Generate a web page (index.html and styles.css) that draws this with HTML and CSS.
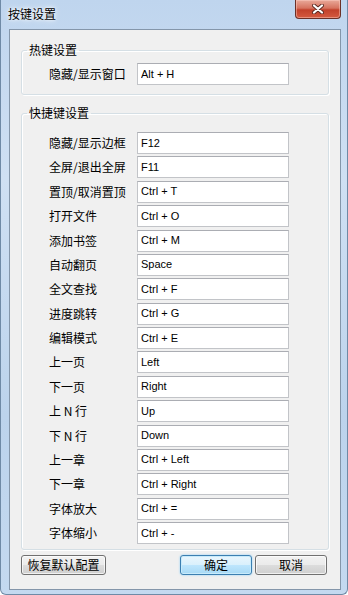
FILE: index.html
```html
<!DOCTYPE html>
<html lang="zh-cn">
<head>
    <meta charset="UTF-8">
    <meta name="viewport" content="width=device-width, initial-scale=1.0">
    <title>按键设置</title>
    <link rel="stylesheet" href="styles.css">
</head>
<body>
    <div class="window">
        <div class="titlebar">
            <span class="title">按键设置</span>
            <button type="button" class="close" aria-label="关闭">
                <svg width="12" height="10" viewBox="0 0 12 10">
                    <path d="M2 1.5 L10 8.5 M10 1.5 L2 8.5" stroke="#5b2a22" stroke-width="4" stroke-linecap="round"/>
                    <path d="M2 1.5 L10 8.5 M10 1.5 L2 8.5" stroke="#ffffff" stroke-width="2.2" stroke-linecap="round"/>
                </svg>
            </button>
        </div>

        <div class="client">
            <fieldset class="group group-hot">
                <legend>热键设置</legend>
                <div class="rows">
                    <label for="k0">隐藏/显示窗口</label>
                    <input type="text" id="k0" value="Alt + H">
                </div>
            </fieldset>

            <fieldset class="group group-keys">
                <legend>快捷键设置</legend>
                <div class="rows">
                    <label for="k1">隐藏/显示边框</label>
                    <input type="text" id="k1" value="F12">
                    <label for="k2">全屏/退出全屏</label>
                    <input type="text" id="k2" value="F11">
                    <label for="k3">置顶/取消置顶</label>
                    <input type="text" id="k3" value="Ctrl + T">
                    <label for="k4">打开文件</label>
                    <input type="text" id="k4" value="Ctrl + O">
                    <label for="k5">添加书签</label>
                    <input type="text" id="k5" value="Ctrl + M">
                    <label for="k6">自动翻页</label>
                    <input type="text" id="k6" value="Space">
                    <label for="k7">全文查找</label>
                    <input type="text" id="k7" value="Ctrl + F">
                    <label for="k8">进度跳转</label>
                    <input type="text" id="k8" value="Ctrl + G">
                    <label for="k9">编辑模式</label>
                    <input type="text" id="k9" value="Ctrl + E">
                    <label for="k10">上一页</label>
                    <input type="text" id="k10" value="Left">
                    <label for="k11">下一页</label>
                    <input type="text" id="k11" value="Right">
                    <label for="k12">上 N 行</label>
                    <input type="text" id="k12" value="Up">
                    <label for="k13">下 N 行</label>
                    <input type="text" id="k13" value="Down">
                    <label for="k14">上一章</label>
                    <input type="text" id="k14" value="Ctrl + Left">
                    <label for="k15">下一章</label>
                    <input type="text" id="k15" value="Ctrl + Right">
                    <label for="k16">字体放大</label>
                    <input type="text" id="k16" value="Ctrl + =">
                    <label for="k17">字体缩小</label>
                    <input type="text" id="k17" value="Ctrl + -">
                </div>
            </fieldset>

            <div class="actions">
                <button type="button" class="btn btn-reset">恢复默认配置</button>
                <span class="spacer"></span>
                <button type="button" class="btn btn-ok">确定</button>
                <button type="button" class="btn">取消</button>
            </div>
        </div>
    </div>
</body>
</html>
```

FILE: styles.css
```css
html, body {
    margin: 0;
    padding: 0;
}
body {
    font-family: "Noto Sans CJK SC", "Liberation Sans", sans-serif;
    font-size: 12px;
    color: #000;
    background: #fff;
}
.window {
    box-sizing: border-box;
    width: 348px;
    height: 595px;
    padding: 0 6px 4px 8px;
    display: flex;
    flex-direction: column;
    border: 1px solid #6f8aa6;
    border-top: none;
    border-radius: 0 0 6px 6px;
    background: linear-gradient(to bottom, #bfd5ee 0%, #cfe0f3 30%, #bcd3ec 70%, #c4d9f0 100%);
}
.titlebar {
    height: 29px;
    display: flex;
    align-items: flex-start;
}
.title {
    margin-top: 5px;
    margin-left: -1px;
    line-height: 18px;
    text-shadow: 0 0 6px #fff, 0 0 3px #fff;
}
.close {
    margin-left: auto;
    margin-right: 0;
    width: 46px;
    height: 19px;
    padding: 0;
    border: 1px solid #6b3027;
    border-top: none;
    border-radius: 0 0 4px 4px;
    background: linear-gradient(to bottom, #e9a99a 0%, #d6735f 45%, #c2412b 55%, #d45a40 100%);
    box-shadow: inset 0 0 0 1px rgba(255, 210, 200, 0.45);
    display: flex;
    align-items: center;
    justify-content: center;
}
.close svg {
    display: block;
}
.client {
    flex: 1;
    background: #f0f0f0;
    border: 1px solid #8496aa;
    display: flex;
    flex-direction: column;
}
.group {
    margin: 0 11px 0 11px;
    padding: 0;
    border: 1px solid #d5dfe5;
    border-radius: 3px;
    box-shadow: 1px 1px 0 #fff, inset 1px 1px 0 #fff;
    min-width: 0;
}
.group legend {
    margin-left: 5px;
    padding: 0 2px;
    line-height: 16px;
}
.group-hot {
    margin-top: 12px;
    padding-top: 5px;
    padding-bottom: 9px;
}
.group-keys {
    margin-top: 10px;
    padding-top: 11px;
    padding-bottom: 5px;
}
.rows {
    display: grid;
    grid-template-columns: 88px 152px;
    row-gap: 2.375px;
    align-items: center;
    padding-left: 27px;
}
.rows label {
    line-height: 16px;
    white-space: nowrap;
}
.rows input {
    box-sizing: border-box;
    width: 152px;
    height: 22px;
    margin: 0;
    padding: 0 3px 1px;
    border: 1px solid #c2c4c8;
    border-top-color: #abadb3;
    background: #fff;
    font-family: "Liberation Sans", Arial, sans-serif;
    font-size: 11px;
    color: #000;
    outline: none;
}
.actions {
    display: flex;
    gap: 3px;
    margin: 5px 13px 0 11px;
}
.spacer {
    flex: 1;
}
.btn {
    box-sizing: border-box;
    height: 20px;
    width: 72px;
    padding: 0;
    border: 1px solid #707070;
    border-radius: 3px;
    background: linear-gradient(to bottom, #f2f2f2 0%, #ebebeb 50%, #dddddd 50%, #cfcfcf 100%);
    box-shadow: inset 0 0 0 1px rgba(255, 255, 255, 0.7);
    font-family: "Noto Sans CJK SC", sans-serif;
    font-size: 12px;
    line-height: 16px;
    color: #000;
}
.btn-reset {
    width: 85px;
}
.btn-ok {
    border-color: #3c7fb1;
    background: linear-gradient(to bottom, #eaf6fd 0%, #d9f0fc 50%, #bee6fd 50%, #a7d9f5 100%);
    box-shadow: inset 0 0 0 1px #c8ebfb, 0 0 2px #7fc9f5;
}
```
